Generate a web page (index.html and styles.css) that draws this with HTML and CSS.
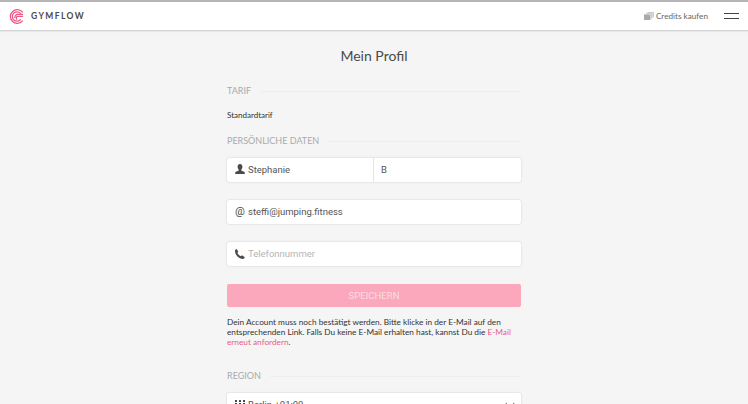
FILE: index.html
```html
<!DOCTYPE html>
<html lang="de">
<head>
    <meta charset="UTF-8">
    <meta name="viewport" content="width=device-width, initial-scale=1.0">
    <title>Mein Profil</title>
    <link rel="stylesheet" href="styles.css">
</head>
<body>
    <header class="topbar">
        <a class="brand">
            <svg class="brand-logo" viewBox="0 0 16 16" width="15" height="15" fill="none" stroke="#ee5a86" stroke-width="1.4">
                <path d="M14.600 3.600A7.300 7.300 0 1 0 14.600 12.400"/>
                <path d="M12.600 5A5 5 0 1 0 12.600 11"/>
                <path d="M15 7.900H8.600A2.200 2.200 0 0 0 8.600 11.200"/>
                <path d="M15 5.800H8.200A4 4 0 0 0 6.200 9.600"/>
            </svg>
            <span class="brand-name">GYMFLOW</span>
        </a>
        <div class="topbar-right">
            <a class="credits">
                <svg class="credits-icon" viewBox="0 0 10 8" width="10" height="8" fill="#a9a9a9">
                    <path d="M0 2.500h6.500v5.500H0z"/>
                    <path d="M2 1.200h6.500v1H2zM7.200 2.200h1.300v4.300H7.200z" fill="#bdbdbd"/>
                    <path d="M3.500 0H10v5H9V1H3.500z" fill="#c9c9c9"/>
                </svg>
                Credits kaufen
            </a>
            <div class="burger"><span></span><span></span></div>
        </div>
    </header>

    <main class="profile">
        <h1>Mein Profil</h1>

        <div class="section-title first"><span>TARIF</span></div>
        <p class="plan">Standardtarif</p>

        <div class="section-title"><span>PERSÖNLICHE DATEN</span></div>
        <div class="field name-field">
            <div class="name-part">
                <svg class="icon" viewBox="0 0 12 12" width="12" height="12" fill="#4a4a4a">
                    <path d="M6 1c1.500 0 2.400 1.200 2.400 2.800 0 1.100-.4 2.100-1.100 2.700v.9c0 .5 3 .9 3.500 2.100V11H1.200V9.500c.5-1.200 3.500-1.600 3.500-2.100v-.9C4 5.900 3.600 4.900 3.600 3.800 3.600 2.200 4.500 1 6 1z"/>
                </svg>
                <span class="value">Stephanie</span>
            </div>
            <div class="name-part last"><span class="value">B</span></div>
        </div>

        <div class="field">
            <span class="icon at">@</span>
            <span class="value">steffi@jumping.fitness</span>
        </div>

        <div class="field">
            <svg class="icon" viewBox="0 0 12 12" width="12" height="12" fill="#4a4a4a">
                <path d="M2.500 1 4.300 3.600 3.400 5c.7 1.400 1.800 2.500 3.300 3.200l1.300-.9 2.800 1.900c-.3 1.100-1 1.700-2 1.700C4.800 10.800 1 6.800 1 2.900 1 2 1.500 1.300 2.500 1z"/>
            </svg>
            <span class="value placeholder">Telefonnummer</span>
        </div>

        <button class="save">SPEICHERN</button>

        <p class="notice">Dein Account muss noch bestätigt werden. Bitte klicke in der E-Mail auf den entsprechenden Link. Falls Du keine E-Mail erhalten hast, kannst Du die <a>E-Mail erneut anfordern</a>.</p>

        <div class="section-title region"><span>REGION</span></div>
        <div class="field">
            <svg class="icon" viewBox="0 0 12 12" width="12" height="12" fill="#4a4a4a">
                <path d="M1 1h2v2H1zM5 1h2v2H5zM9 1h2v2H9zM1 4h2v2H1zM5 4h2v2H5zM9 4h2v2H9zM1 7h2v4H1zM5 7h2v4H5zM9 7h2v4H9z"/>
            </svg>
            <span class="value">Berlin +01:00</span>
            <span class="arrows">
                <svg viewBox="0 0 10 6" width="10" height="6" fill="none" stroke="#777" stroke-width="1.200"><path d="M1 1 2.500 4M9 1 7.500 4"/></svg>
            </span>
        </div>
    </main>
</body>
</html>
```

FILE: styles.css
```css
html, body {
    height: 100%;
    overflow: hidden;
}
body {
    font-family: "Lato", "Liberation Sans", sans-serif;
    margin: 0;
    background-color: #f5f5f5;
    color: #333;
}
.topbar {
    height: 28px;
    background-color: #fff;
    border-top: 2px solid #b4b4b4;
    border-bottom: 1px solid #d4d4d4;
    display: flex;
    justify-content: space-between;
    align-items: center;
    padding: 0 9px;
    box-shadow: 0 1px 1px rgba(0, 0, 0, 0.05);
}
.brand {
    display: flex;
    align-items: center;
}
.brand-name {
    margin-left: 7px;
    font-size: 8.500px;
    font-weight: 700;
    letter-spacing: 1.400px;
    color: #4a4a4a;
}
.topbar-right {
    display: flex;
    align-items: center;
}
.credits {
    display: flex;
    align-items: center;
    gap: 2px;
    font-size: 8.200px;
    color: #666;
}
.burger {
    margin-left: 16px;
    width: 15px;
    display: flex;
    flex-direction: column;
    gap: 4px;
}
.burger span {
    display: block;
    height: 1px;
    background-color: #444;
}
.profile {
    width: 294px;
    margin: 0 auto;
}
h1 {
    margin: 15px 0 0;
    font-size: 14px;
    line-height: 20px;
    font-weight: 400;
    text-align: center;
    color: #4a4a4a;
}
.section-title {
    display: flex;
    align-items: center;
    gap: 9px;
    margin-top: 14px;
    font-size: 9px;
    line-height: 12px;
    color: #aaa;
}
.section-title::after {
    content: "";
    flex: 1;
    height: 1px;
    background-color: #eee;
}
.section-title.first {
    margin-top: 19px;
}
.section-title.region {
    margin-top: 23px;
}
.plan {
    margin: 12px 0 0;
    font-size: 8px;
    line-height: 12px;
    color: #333;
}
.field {
    display: flex;
    align-items: center;
    box-sizing: border-box;
    height: 24px;
    margin-top: 18px;
    padding: 0 0 1px 7px;
    background-color: #fff;
    border-radius: 2px;
    box-shadow: 0 0 2px rgba(0, 0, 0, 0.2);
    font-family: "Roboto", "Liberation Sans", sans-serif;
    font-size: 9.500px;
    color: #555;
}
.name-field {
    margin-top: 11px;
    padding-left: 0;
}
.name-part {
    display: flex;
    align-items: center;
    width: 147px;
    height: 24px;
    padding: 0 0 1px 7px;
    box-sizing: border-box;
    border-right: 1px solid #e4e4e4;
}
.name-part.last {
    border-right: 0;
}
.icon {
    width: 12px;
    margin-right: 2px;
    flex-shrink: 0;
}
.at {
    font-size: 11px;
    color: #4a4a4a;
    text-align: center;
}
.placeholder {
    color: #b5b5b5;
}
.arrows {
    margin-left: auto;
    margin-right: 6px;
    display: flex;
    align-self: flex-start;
    margin-top: 9px;
}
.save {
    display: block;
    width: 100%;
    height: 23px;
    margin-top: 18px;
    padding: 0;
    border: 0;
    border-radius: 2px;
    background-color: #fba8bc;
    color: #fcd9e2;
    font-family: "Roboto", "Liberation Sans", sans-serif;
    font-size: 9.600px;
}
.notice {
    margin: 10px 0 0;
    font-size: 8.250px;
    line-height: 10px;
    color: #333;
}
.notice a {
    color: #ec5a87;
}
.region + .field {
    margin-top: 11px;
}
```
